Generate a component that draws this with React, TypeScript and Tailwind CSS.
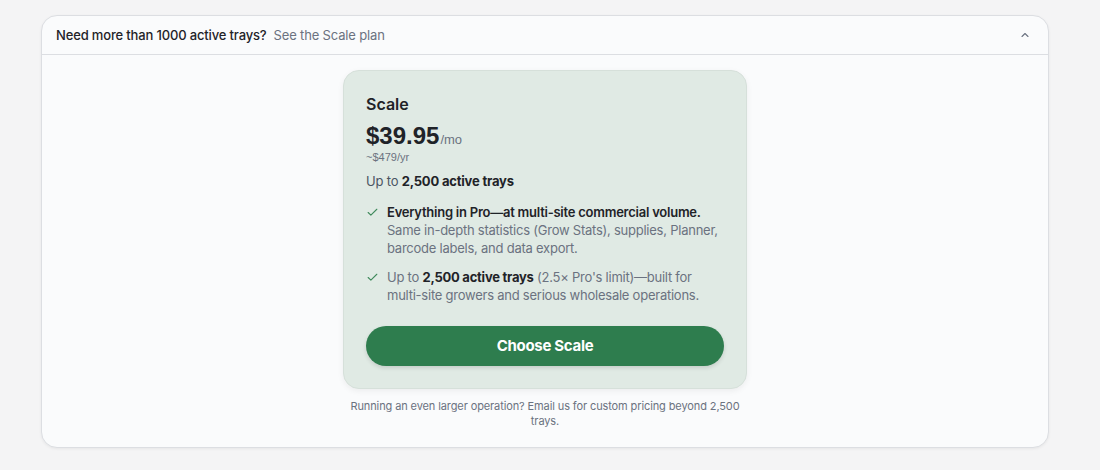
import React from "react";

export default function App() {
  return (
    <div className="min-h-[470px] w-full bg-[#f4f4f5] px-[41px] pt-[15px] pb-[24px]" style={{ fontFamily: "Inter, 'Noto Sans', sans-serif" }}>
      <div className="w-[1008px] rounded-[16px] border border-[#dcdee2] bg-[#fafbfc] shadow-[0_1px_3px_rgba(0,0,0,0.06)]">
        <div className="flex h-[39px] items-center justify-between border-b border-[#dcdee2] pl-[14px] pr-[17px]">
          <div className="text-[13px] leading-none tracking-[-0.012em]">
            <span className="font-medium text-[#1f2328]">Need more than 1000 active trays?</span>
            <span className="ml-[7px] text-[#6b7280]">See the Scale plan</span>
          </div>
          <svg width="12" height="12" viewBox="0 0 24 24" fill="none" stroke="#6b7280" strokeWidth="2.2" strokeLinecap="round" strokeLinejoin="round">
            <path d="M6 15l6-6 6 6" />
          </svg>
        </div>
        <div className="flex flex-col items-center pt-[15px] pb-[18px]">
          <div className="w-[404px] rounded-[16px] border border-[#d6e0da] bg-[#e0eae4] px-[22px] pt-[23px] pb-[22px] shadow-[0_2px_6px_rgba(0,0,0,0.06)]">
            <div className="text-[16px] font-semibold leading-[20px] text-[#1f2328]">Scale</div>
            <div className="mt-[8px] flex items-baseline" style={{ fontFamily: "'Liberation Sans', Arial, sans-serif" }}>
              <span className="text-[24px] font-bold leading-[28px] text-[#1f2328]">$39.95</span>
              <span className="ml-[1px] text-[13px] text-[#6b7280]">/mo</span>
            </div>
            <div className="text-[11px] leading-[14px] text-[#6b7280]" style={{ fontFamily: "'Liberation Sans', Arial, sans-serif" }}>~$479/yr</div>
            <div className="mt-[8px] text-[13px] leading-[18px] tracking-[-0.015em] text-[#4b5563]">
              Up to <span className="font-bold text-[#1f2328]">2,500 active trays</span>
            </div>
            <div className="mt-[13px] flex flex-col gap-[11px] tracking-[-0.015em]">
              <div className="flex gap-[8px]">
                <Check />
                <div className="text-[13px] leading-[18px] text-[#6b7280]">
                  <div className="font-semibold text-[#1f2328]">Everything in Pro—at multi-site commercial volume.</div>
                  <div>Same in-depth statistics (Grow Stats), supplies, Planner, barcode labels, and data export.</div>
                </div>
              </div>
              <div className="flex gap-[8px]">
                <Check />
                <div className="text-[13px] leading-[18px] text-[#6b7280]">
                  Up to <span className="font-bold text-[#1f2328]">2,500 active trays</span> (2.5× Pro's limit)—built for multi-site growers and serious wholesale operations.
                </div>
              </div>
            </div>
            <button className="mt-[22px] flex h-[40px] w-full items-center justify-center rounded-full bg-[#2e7d4e] text-[15px] font-bold tracking-[-0.02em] text-white shadow-[0_2px_4px_rgba(0,0,0,0.12)]">
              Choose Scale
            </button>
          </div>
          <div className="mt-[10px] w-[404px] text-center text-[11px] leading-[15px] tracking-[-0.01em] text-[#6b7280]">
            Running an even larger operation? Email us for custom pricing beyond 2,500 trays.
          </div>
        </div>
      </div>
    </div>
  );
}

function Check() {
  return (
    <svg className="mt-[3px] shrink-0" width="13" height="13" viewBox="0 0 24 24" fill="none" stroke="#3f8a5c" strokeWidth="2" strokeLinecap="round" strokeLinejoin="round">
      <path d="M20 6L9 17l-5-5" />
    </svg>
  );
}
